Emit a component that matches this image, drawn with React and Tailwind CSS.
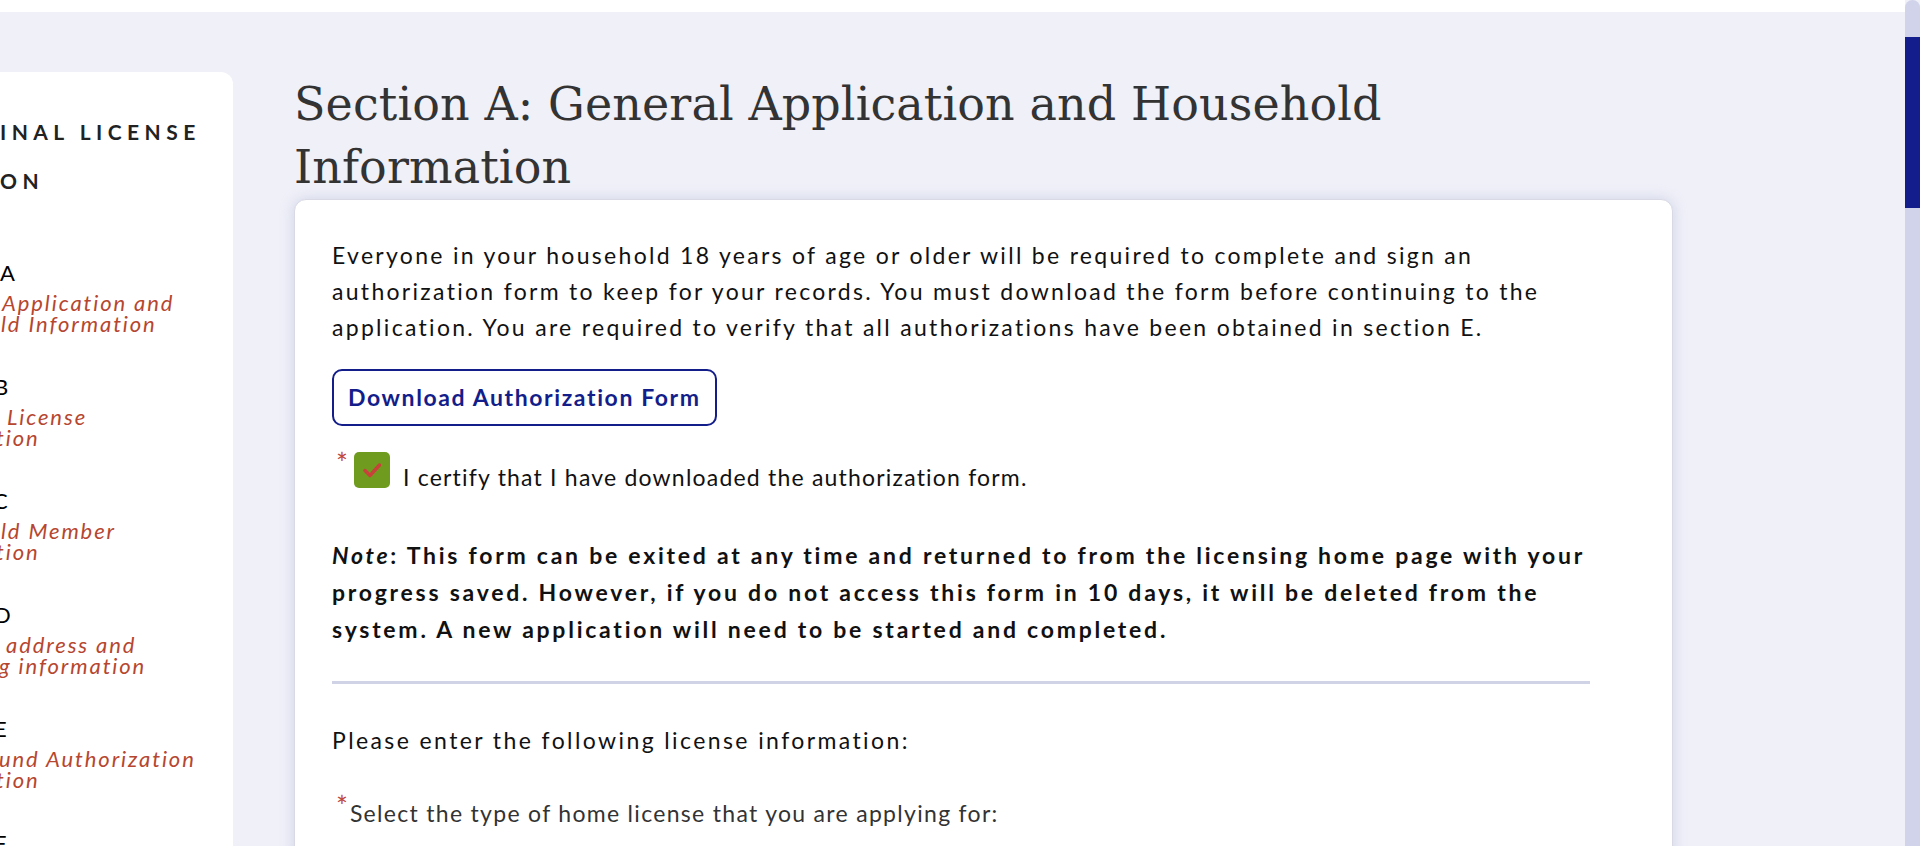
const groups = [
  { letter: 'A', shift: 'ml-0', lines: [['Application and', 'ml-[2px]'], ['ld Information', 'ml-[1px]']] },
  { letter: 'B', shift: 'ml-[-6px]', lines: [[' License', 'ml-[7px]'], ['tion', 'ml-[-4px]']] },
  { letter: 'C', shift: 'ml-[-7px]', lines: [['ld Member', 'ml-[1px]'], ['tion', 'ml-[-4px]']] },
  { letter: 'D', shift: 'ml-[-6px]', lines: [['address and', 'ml-[6px]'], ['g information', 'ml-[-1px]']] },
  { letter: 'E', shift: 'ml-[-6px]', lines: [['und Authorization', 'ml-[-1px]'], ['tion', 'ml-[-4px]']] },
  { letter: 'F', shift: 'ml-[-6px]', lines: [] },
];

function Sidebar() {
  return (
    <aside className="mt-[60px] w-[233px] shrink-0 overflow-hidden rounded-tr-[12px] bg-white pt-[35px]">
      <div className="text-[21px] font-bold uppercase leading-[49px] tracking-[0.26em] text-[#222]">
        <div>inal license</div>
        <div>on</div>
      </div>
      <nav className="mt-[48px]">
        {groups.map((g) => (
          <div key={g.letter} className="mb-[33px] whitespace-nowrap">
            <div className={`${g.shift} text-[22px] leading-[39px] text-black`}>{g.letter}</div>
            {g.lines.map(([t, m]) => (
              <div key={t} className={`${m} text-[22px] italic leading-[21px] tracking-[1.9px] text-[#b6462f]`}>{t}</div>
            ))}
          </div>
        ))}
      </nav>
    </aside>
  );
}

function Star({ className = '' }) {
  return <span className={`text-[#c0483a] ${className}`}>*</span>;
}

function Main() {
  return (
    <main className="ml-[61px] w-[1379px] shrink-0">
      <h1 className="mt-[61px] max-w-[1150px] text-[46px] leading-[63px] tracking-[0.1px] text-[#333] [font-family:'DejaVu_Serif',serif]">
        Section A: General Application and Household Information
      </h1>
      <section className="h-[700px] rounded-[12px] border border-[#d8d9e4] bg-white pl-[37px] pt-[37px] shadow-[0_0_14px_rgba(170,176,210,0.45)]">
        <div className="w-[1258px]">
          <p className="text-[23px] leading-[36px] tracking-[2.3px] text-[#111]">
            Everyone in your household 18 years of age or older will be required to complete and sign an
            authorization form to keep for your records. You must download the form before continuing to the
            application. You are required to verify that all authorizations have been obtained in section E.
          </p>

          <button className="mt-[24px] h-[57px] rounded-[10px] border-2 border-[#141e8a] px-[14px] text-[23px] font-bold tracking-[1.6px] text-[#141e8a]">
            Download Authorization Form
          </button>

          <label className="mt-[26px] flex items-start">
            <span className="w-[22px] pl-[4px] text-[28px] leading-[22px]">
              <Star />
            </span>
            <span className="flex h-[36px] w-[36px] items-center justify-center rounded-[5px] bg-[#6f9b1f]">
              <svg width="22" height="22" viewBox="0 0 22 22" fill="none">
                <path d="M4 11.5l5 5L18.5 6" stroke="#c8413a" strokeWidth="3.5" strokeLinecap="round" strokeLinejoin="round" />
              </svg>
            </span>
            <span className="ml-[13px] mt-[10px] text-[23px] leading-[30px] tracking-[1.2px] text-[#111]">
              I certify that I have downloaded the authorization form.
            </span>
          </label>

          <p className="mt-[45px] text-[23px] font-bold leading-[37px] tracking-[2.75px] text-[#111]">
            <em>Note</em>: This form can be exited at any time and returned to from the licensing home page with your
            progress saved. However, if you do not access this form in 10 days, it will be deleted from the
            system. A new application will need to be started and completed.
          </p>

          <div className="mt-[33px] h-[3px] bg-[#d0d3e6]" />

          <p className="mt-[38px] text-[23px] leading-[36px] tracking-[2.4px] text-[#111]">
            Please enter the following license information:
          </p>

          <p className="mt-[37px] flex items-start text-[23px] leading-[36px] text-[#333]">
            <Star className="mr-[2px] mt-[-4px] pl-[4px] text-[28px] leading-[30px]" />
            <span className="tracking-[1.3px]">Select the type of home license that you are applying for:</span>
          </p>
        </div>
      </section>
    </main>
  );
}

function Scrollbar() {
  return (
    <div className="flex w-[15px] shrink-0 flex-col overflow-hidden rounded-t-[8px] bg-[#d0d3ea]">
      <div className="h-[37px] shrink-0" />
      <div className="h-[171px] shrink-0 bg-[#131d8c]" />
    </div>
  );
}

export default function App() {
  return (
    <div className="flex h-[846px] w-full overflow-hidden bg-[#eff0f8] [font-family:Lato,sans-serif]">
      <div className="flex min-w-0 flex-1 flex-col">
        <div className="h-[12px] shrink-0 bg-white" />
        <div className="flex min-h-0 flex-1">
          <Sidebar />
          <Main />
        </div>
      </div>
      <Scrollbar />
    </div>
  );
}
